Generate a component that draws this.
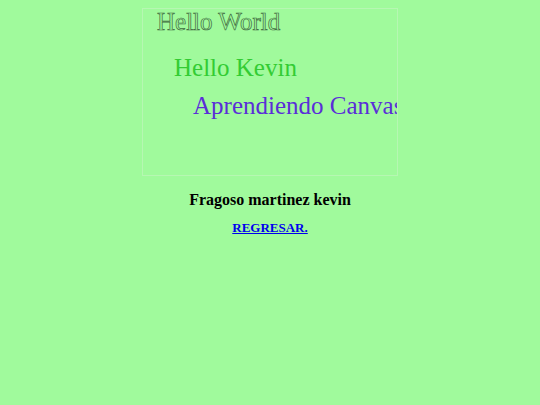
import React from "react";

export default function App() {
  return (
    <div className="min-h-[405px] w-full bg-[#a0fa9c] pt-[8px] font-['Liberation_Serif',serif]">
      <div className="relative mx-auto h-[168px] w-[256px] overflow-hidden border border-[#b6f7b2]">
        <div className="absolute left-[14px] top-[0px] whitespace-nowrap text-[25px] leading-none text-transparent [-webkit-text-stroke:0.7px_#3f6a3f]">
          Hello World
        </div>
        <div className="absolute left-[31px] top-[46px] whitespace-nowrap text-[25px] leading-none text-[#33cc33]">
          Hello Kevin
        </div>
        <div className="absolute left-[50px] top-[84px] whitespace-nowrap text-[25px] leading-none text-[#5a2ed8]">
          Aprendiendo Canvas
        </div>
      </div>
      <div className="mt-[15px] text-center text-[16px] font-bold leading-[18px] text-black">
        Fragoso martinez kevin
      </div>
      <div className="mt-[11px] text-center text-[13px] font-bold leading-[15px]">
        <a href="#" className="text-[#0000ee] underline">
          REGRESAR.
        </a>
      </div>
    </div>
  );
}
